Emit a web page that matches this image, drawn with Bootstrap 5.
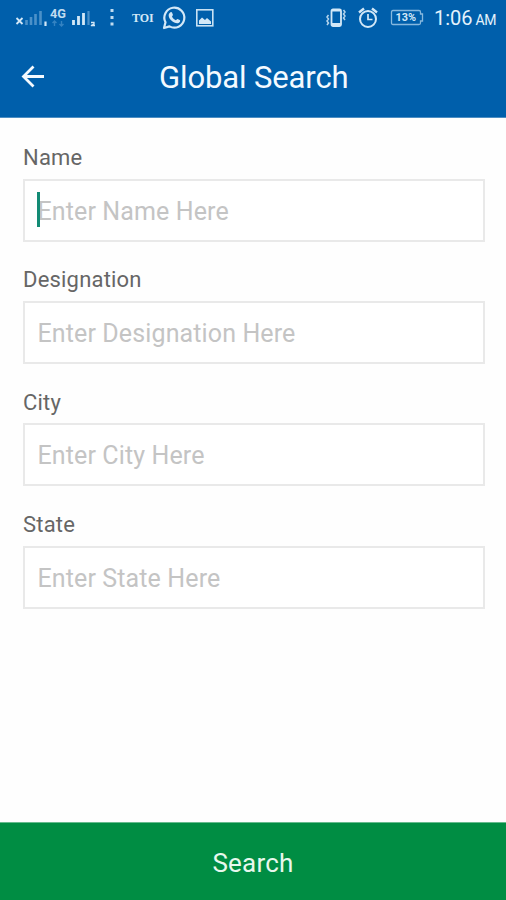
<!DOCTYPE html>
<html lang="en">
<head>
<meta charset="utf-8">
<meta name="viewport" content="width=device-width, initial-scale=1">
<title>Global Search</title>
<link rel="stylesheet" href="https://cdn.jsdelivr.net/npm/bootstrap@5.3.0/dist/css/bootstrap.min.css">
<style>
body{font-family:Roboto,"Noto Sans",sans-serif;background:#fefefe;height:900px;overflow:hidden}
.app-head{background:#005fab;height:118px;color:#f4faff;border-bottom:1px solid #4d8ec3}
.status{height:36px;padding:0 11px 0 14px;color:#d3e8f7}
.status svg{display:block;flex:none}
.toi{font:700 12px/36px "Liberation Serif",serif;margin-left:15px;width:24px;white-space:nowrap}
.clock{font-size:20px;line-height:36px;margin-left:10px;width:61px;white-space:nowrap;color:#e4f2fc;padding-top:2px}
.clock span{font-size:14px;margin-left:-2px;letter-spacing:-.3px}
.title-bar{height:82px;padding-left:20px}
.back{width:26px;height:26px;padding:0;border:0;background:none;margin-top:-3px}
.page-title{font-size:31px;line-height:40px;font-weight:400;margin-left:113px;letter-spacing:-.12px;padding-top:2px}
.fields{padding:27px 21px 0 23px}
.field-item{height:122.4px}
.field-item label{display:block;font-size:22px;line-height:26px;color:#666;margin-bottom:7.5px;letter-spacing:.2px}
.field-item .form-control{height:63px;border:2px solid #e9e9e9;border-radius:0;padding:4px 12px 2px 12.5px;font-size:25px;line-height:30px;letter-spacing:.12px;background:#fff;box-shadow:none}
.field-item .form-control::placeholder{color:#c4c4c4;opacity:1}
.caret{width:3px;height:35px;background:#138b75;left:37px;top:192px}
.search-btn{height:78px;background:#008d43;color:#e8f8ee;font-size:26px;line-height:30px;letter-spacing:.2px;border:0;border-top:1px solid #66bb8e;border-radius:0;padding:3px 0 0}
</style>
<script src="https://cdn.jsdelivr.net/npm/bootstrap@5.3.0/dist/js/bootstrap.bundle.min.js"></script>
</head>
<body class="d-flex flex-column position-relative">
<header class="app-head flex-shrink-0">
  <div class="status d-flex align-items-center">
    <svg width="103" height="36" viewBox="14 0 103 36">
      <path d="M16.500 18l6 6M22.500 18l-6 6" stroke="#d3e8f7" stroke-width="1.800"/>
      <path d="M26.500 25v-5M31 25v-8M35.500 25v-11M40.500 25v-14" stroke="#4b91c9" stroke-width="2.600"/>
      <path d="M45.500 21.500v4.500" stroke="#d3e8f7" stroke-width="2.200"/>
      <text x="50" y="18" font-family="Roboto,sans-serif" font-size="12.500" font-weight="700" fill="#c0dcf0" textLength="16" lengthAdjust="spacingAndGlyphs">4G</text>
      <path d="M54.500 26v-5M52.500 23l2-2 2 2M61.500 21v5M59.500 24l2 2 2-2" stroke="#3483c2" stroke-width="1.400" fill="none"/>
      <path d="M73.500 25v-5M78.500 25v-9M83.500 25v-12" stroke="#d3e8f7" stroke-width="2.800"/>
      <path d="M88.500 25v-14" stroke="#4b91c9" stroke-width="2.200"/>
      <path d="M91 22.500h3v1.500l-3 1.500h4" stroke="#d3e8f7" stroke-width="1.300" fill="none"/>
      <path d="M110.500 9h3v3h-3zM110.500 16h3v3h-3zM110.500 22.500h3v3h-3z" fill="#c0dcf0"/>
    </svg>
    <div class="toi">TOI</div>
    <svg width="26" height="26" viewBox="0 0 26 26" style="margin-left:5px">
      <path d="M3 23l1.500-5.700A10 10 0 1 1 8.500 21.400z" fill="none" stroke="#d3e8f7" stroke-width="2.200" stroke-linejoin="round"/>
      <path d="M9.500 7.200c.7-.3 1.300-.1 1.600.6l.8 1.900c.2.600-.9 1.300-.9 1.800.8 1.700 2 2.900 3.800 3.700.6 0 1.300-1.400 1.800-1.200l2.100 1c.7.300.5 1.300.1 2-1.300 1.800-3.500 1.500-5.600.5-2.300-1.100-4.200-3-5.200-5.300-.7-2-.3-4.100 1.500-5z" fill="#d3e8f7"/>
    </svg>
    <svg width="20" height="20" viewBox="0 0 20 20" style="margin-left:8px">
      <rect x="1.800" y="1.800" width="16" height="16" fill="none" stroke="#c8e1f3" stroke-width="1.600"/>
      <path d="M4 16V12.500l3-3 3 2.500 2-2 4 3.500V16z" fill="#d3e8f7"/>
    </svg>
    <svg class="ms-auto" width="20" height="22" viewBox="0 0 20 22">
      <rect x="5.500" y="2.500" width="9.500" height="16.500" rx="1.500" fill="none" stroke="#d3e8f7" stroke-width="1.800"/>
      <path d="M5.700 16h9v2.500h-9zM5.700 3h9v1.500h-9z" fill="#d3e8f7"/>
      <path d="M2.500 8l-1.500 2 1.500 2-1.500 2 1.500 2-1.500 2M17.500 3l1.500 2-1.500 2 1.500 2-1.500 2 1.500 2" fill="none" stroke="#b5d5ed" stroke-width="1.500"/>
    </svg>
    <svg width="22" height="24" viewBox="0 0 22 24" style="margin-left:11px">
      <circle cx="11" cy="13" r="8" fill="none" stroke="#d3e8f7" stroke-width="2"/>
      <path d="M2 6.500L7 2.500M20 6.500L15 2.500" stroke="#d3e8f7" stroke-width="2.400"/>
      <path d="M11 8v5.500h4.500" stroke="#d3e8f7" stroke-width="1.700" fill="none"/>
    </svg>
    <svg width="34" height="18" viewBox="0 0 34 18" style="margin-left:11px">
      <path d="M3 1.500h26q1.500 0 1.500 1.500v2h2v7h-2v2q0 1.500-1.500 1.500H3q-1.500 0-1.500-1.500V3q0-1.500 1.500-1.500z" fill="none" stroke="#86b8de" stroke-width="1.300"/>
      <text x="5.500" y="12.200" font-family="Roboto,sans-serif" font-size="10.500" font-weight="700" fill="#d3e8f7" textLength="20.500" lengthAdjust="spacingAndGlyphs">13%</text>
    </svg>
    <div class="clock">1:06 <span>AM</span></div>
  </div>
  <div class="title-bar d-flex align-items-center">
    <button class="back" type="button" aria-label="Back">
      <svg class="d-block" width="26" height="26" viewBox="0 0 26 26" fill="none" stroke="#f4faff" stroke-width="2.800"><path d="M24 13.500H4M13.500 3.500l-10 10 10 10"/></svg>
    </button>
    <h1 class="page-title mb-0">Global Search</h1>
  </div>
</header>
<main class="fields flex-grow-1">
  <div class="field-item"><label for="name">Name</label><input id="name" class="form-control" type="text" placeholder="Enter Name Here"></div>
  <div class="field-item"><label for="designation">Designation</label><input id="designation" class="form-control" type="text" placeholder="Enter Designation Here"></div>
  <div class="field-item"><label for="city">City</label><input id="city" class="form-control" type="text" placeholder="Enter City Here"></div>
  <div class="field-item"><label for="state">State</label><input id="state" class="form-control" type="text" placeholder="Enter State Here"></div>
</main>
<span class="caret position-absolute"></span>
<button class="btn search-btn w-100 flex-shrink-0" type="button">Search</button>
</body>
</html>
